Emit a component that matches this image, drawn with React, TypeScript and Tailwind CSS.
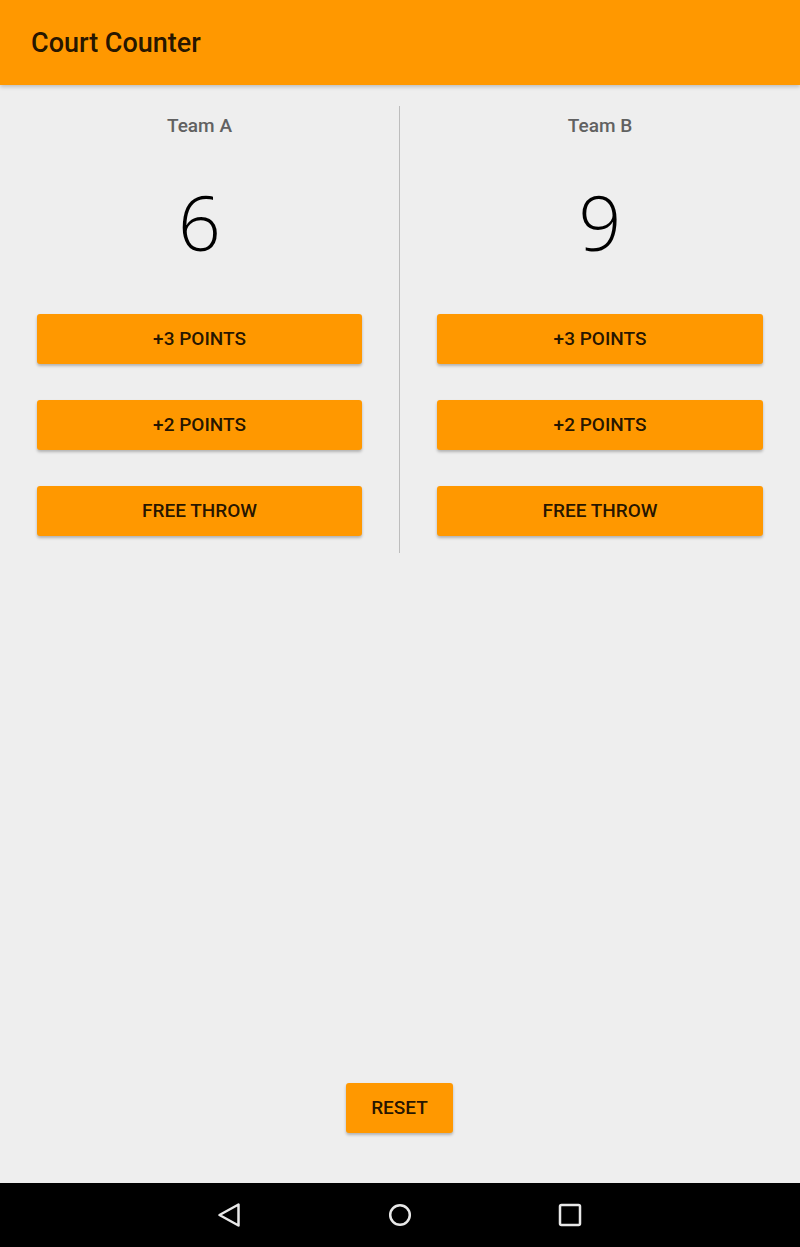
import React from "react";

function TeamColumn({ name, score }: { name: string; score: number }) {
  const labels = ["+3 POINTS", "+2 POINTS", "FREE THROW"];
  return (
    <div className="flex flex-1 flex-col items-center px-[37px] pb-[17px]">
      <div className="pt-[9px] text-[19px] leading-[22px] font-medium text-[#616161]">{name}</div>
      <div
        className="mt-[40px] h-[90px] text-[75px] leading-[90px] font-light text-black"
        style={{ fontFamily: '"Open Sans", "Noto Sans", sans-serif' }}
      >
        {score}
      </div>
      <div className="mt-[47px] flex w-full flex-col gap-[36px]">
        {labels.map((l) => (
          <button
            key={l}
            className="h-[50px] w-full rounded-[3px] bg-[#ff9800] pt-px text-[19px] font-medium text-black/[0.87] shadow-[0_2px_3px_rgba(0,0,0,0.25)]"
          >
            {l}
          </button>
        ))}
      </div>
    </div>
  );
}

export default function App() {
  return (
    <div
      className="flex h-[1247px] w-[800px] flex-col bg-[#eeeeee]"
      style={{ fontFamily: 'Roboto, "Liberation Sans", sans-serif' }}
    >
      <header className="relative z-10 flex h-[85px] shrink-0 items-center bg-[#ff9800] pl-[31px] pt-[2px] shadow-[0_2px_4px_rgba(0,0,0,0.2)]">
        <h1 className="text-[27px] font-medium text-black/[0.87]">Court Counter</h1>
      </header>
      <main className="flex flex-1 flex-col">
        <div className="mt-[21px] flex">
          <div className="w-[399px]">
            <TeamColumn name="Team A" score={6} />
          </div>
          <div className="w-px bg-[#bdbdbd]" />
          <div className="w-[400px]">
            <TeamColumn name="Team B" score={9} />
          </div>
        </div>
        <div className="mt-auto mb-[50px] flex justify-center">
          <button className="ml-[-1px] h-[50px] w-[107px] rounded-[3px] bg-[#ff9800] pt-px text-[19px] font-medium text-black/[0.87] shadow-[0_2px_3px_rgba(0,0,0,0.25)]">
            RESET
          </button>
        </div>
      </main>
      <nav className="flex h-[64px] shrink-0 items-center justify-center bg-black">
        <div className="flex w-[370px] items-center justify-between">
          <svg width="30" height="30" viewBox="0 0 30 30">
            <path d="M4.5 15 L23.5 4.5 L23.5 25.5 Z" fill="none" stroke="#e8e8e8" strokeWidth="2.5" strokeLinejoin="round" />
          </svg>
          <svg width="30" height="30" viewBox="0 0 30 30">
            <circle cx="15" cy="15" r="9.8" fill="none" stroke="#e8e8e8" strokeWidth="2.5" />
          </svg>
          <svg width="30" height="30" viewBox="0 0 30 30">
            <rect x="5" y="5" width="20" height="20" rx="1.5" fill="none" stroke="#e8e8e8" strokeWidth="2.5" />
          </svg>
        </div>
      </nav>
    </div>
  );
}
